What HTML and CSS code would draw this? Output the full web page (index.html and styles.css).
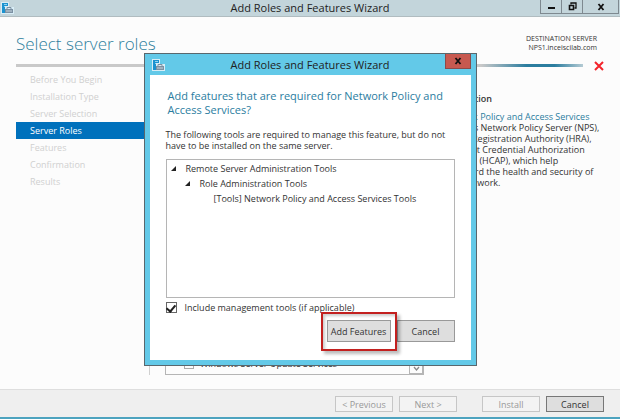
FILE: index.html
```html
<!DOCTYPE html>
<html lang="en">
<head>
<meta charset="utf-8">
<title>Add Roles and Features Wizard</title>
<link rel="stylesheet" href="styles.css">
</head>
<body>
<svg class="defs" aria-hidden="true">
  <symbol id="server" viewBox="0 0 13 12">
    <path d="M0 0H8V5H13V12H0Z" fill="#d8edf6"/>
    <path d="M1 1H7V4H4V11H1Z" fill="#1b92cf"/>
    <path d="M3 2.500H6M3 4.500H4" stroke="#8fd3f2" stroke-width="1"/>
    <path d="M4 7H12V11H4Z" fill="#7c91a3"/>
    <path d="M6 7V5.500H10V7" fill="none" stroke="#7c91a3"/>
    <path d="M5 9H11" stroke="#c4d3dd" stroke-width="1"/>
  </symbol>
</svg>
<div class="window">
  <header class="titlebar">
    <svg class="app-icon"><use href="#server"/></svg>
    <h1 class="title">Add Roles and Features Wizard</h1>
    <div class="controls">
      <button class="control" aria-label="Minimize"><svg width="9" height="9"><path d="M1 6H8" stroke="#111" stroke-width="2"/></svg></button>
      <button class="control" aria-label="Restore"><svg width="9" height="9" fill="none" stroke="#111"><path d="M3 2.500V1H8V6H6.500" stroke-width="1.300"/><path d="M1.500 3.500H5.500V7.500H1.500Z" stroke-width="1.600"/></svg></button>
      <button class="control control-wide" aria-label="Close"><svg width="8" height="8"><path d="M1.500 1L6.500 7M6.500 1L1.500 7" stroke="#111" stroke-width="1.800"/></svg></button>
    </div>
  </header>
  <div class="heading">
    <h2 class="page-title">Select server roles</h2>
    <p class="destination">DESTINATION SERVER<br>NPS1.inceiscilab.com</p>
  </div>
  <div class="progress">
    <div class="progress-line"></div>
    <svg width="10" height="10"><path d="M1 1L9 9M9 1L1 9" stroke="#f3232b" stroke-width="2"/></svg>
  </div>
  <div class="body">
    <nav class="steps">
      <a class="step" href="#">Before You Begin</a>
      <a class="step" href="#">Installation Type</a>
      <a class="step" href="#">Server Selection</a>
      <a class="step step-current" href="#">Server Roles</a>
      <a class="step" href="#">Features</a>
      <a class="step" href="#">Confirmation</a>
      <a class="step" href="#">Results</a>
    </nav>
    <div class="roles">
      <div class="role-list">
        <label class="role"><input class="role-check" type="checkbox">Windows Server Update Services</label>
        <button class="scroll-down" aria-label="Scroll down"><svg width="7" height="5"><path d="M1 1L3.500 4L6 1" fill="none" stroke="#888" stroke-width="1.300"/></svg></button>
      </div>
    </div>
    <section class="details">
      <h3 class="details-title">Description</h3>
      <p class="details-text"><a class="link" href="#">Network Policy and Access Services</a><br>provides Network Policy Server (NPS),<br>Health Registration Authority (HRA),<br>and Host Credential Authorization<br>Protocol (HCAP), which help<br>safeguard the health and security of<br>your network.</p>
    </section>
  </div>
  <footer class="footer">
    <button class="nav-button" disabled>&lt; Previous</button>
    <button class="nav-button" disabled>Next &gt;</button>
    <button class="nav-button nav-install" disabled>Install</button>
    <button class="nav-button">Cancel</button>
  </footer>
  <div class="taskbar"></div>
</div>
<div class="overlay">
  <div class="dialog" role="dialog" aria-labelledby="dialog-title">
    <header class="dialog-bar">
      <svg class="app-icon"><use href="#server"/></svg>
      <h2 class="title" id="dialog-title">Add Roles and Features Wizard</h2>
      <button class="dialog-close" aria-label="Close"><svg width="8" height="8"><path d="M1.500 1L6.500 7M6.500 1L1.500 7" stroke="#111" stroke-width="1.800"/></svg></button>
    </header>
    <div class="dialog-body">
      <h3 class="question">Add features that are required for Network Policy and<br>Access Services?</h3>
      <p class="explain">The following tools are required to manage this feature, but do not<br>have to be installed on the same server.</p>
      <ul class="tree">
        <li class="node"><svg class="arrow"><path d="M0 5L5 0V5Z" fill="#222"/></svg>Remote Server Administration Tools</li>
        <li class="node node-child"><svg class="arrow"><path d="M0 5L5 0V5Z" fill="#222"/></svg>Role Administration Tools</li>
        <li class="node node-leaf">[Tools] Network Policy and Access Services Tools</li>
      </ul>
      <label class="include"><input class="include-check" type="checkbox" checked>Include management tools (if applicable)</label>
      <div class="actions">
        <span class="callout"><button class="button">Add Features</button></span>
        <button class="button button-cancel">Cancel</button>
      </div>
    </div>
  </div>
</div>
</body>
</html>
```
FILE: styles.css
```css
* { box-sizing: border-box; }
body {
  margin: 0;
  font: 9px/11px "Open Sans", "Noto Sans", sans-serif;
  color: #333;
}
h1, h2, h3, p, ul { margin: 0; padding: 0; font-weight: 400; }
button { font: inherit; color: inherit; padding: 0; }
svg { display: block; }
.defs { position: absolute; width: 0; height: 0; }

.window {
  min-height: 100vh;
  display: flex;
  flex-direction: column;
  background: #fcfcfc;
}
.titlebar {
  position: relative;
  display: flex;
  align-items: center;
  height: 17px;
  padding: 0 14px 0 1px;
  background: #c3d5db;
  border-bottom: 1px solid #b0bcc0;
}
.app-icon { width: 13px; height: 12px; }
.title {
  flex: 1;
  text-align: center;
  font-size: 11px;
  line-height: 16px;
  color: #222;
}
.controls {
  position: absolute;
  top: 0;
  right: 1px;
  display: flex;
  border: 1px solid #7e8990;
  border-top: 0;
}
.control {
  width: 21px;
  height: 13px;
  display: grid;
  place-items: center;
  background: none;
  border: 0;
  border-right: 1px solid #7e8990;
}
.control-wide { width: 35px; border-right: 0; }

.heading {
  display: flex;
  justify-content: space-between;
  padding: 15px 23px 0 16px;
  height: 46px;
}
.page-title {
  font-size: 17px;
  font-weight: 300;
  line-height: 24px;
  color: #2f7f9d;
}
.destination {
  padding-top: 2px;
  font-size: 7px;
  line-height: 9px;
  text-align: right;
}
.progress {
  display: flex;
  align-items: center;
  gap: 11px;
  height: 5px;
  padding: 0 16px;
}
.progress-line {
  flex: 1;
  height: 3px;
  background: linear-gradient(90deg, #c9c9c9 82%, #2b7d9f 90%, #2b7d9f 95%, #b5cbd4);
}
.progress svg { overflow: visible; }

.body {
  flex: 1;
  display: grid;
  grid-template-columns: 133px 275px 1fr;
  padding: 3px 16px 14px;
}
.steps { display: flex; flex-direction: column; }
.step {
  line-height: 17px;
  padding-left: 14px;
  color: #d0d0d0;
  text-decoration: none;
}
.step-current { background: #0071bc; color: #fff; }
.roles {
  display: flex;
  padding-left: 15px;
  border-left: 1px solid #d0d0d0;
}
.role-list {
  flex: 1;
  display: flex;
  align-items: flex-end;
  justify-content: space-between;
  border: 1px solid #b5b5b5;
}
.role {
  display: flex;
  align-items: center;
  gap: 6px;
  padding: 0 0 5px 18px;
}
.role-check {
  appearance: none;
  width: 10px;
  height: 10px;
  margin: 0;
  border: 1px solid #aaa;
}
.scroll-down {
  display: grid;
  place-items: center;
  width: 14px;
  height: 12px;
  background: #fcfcfc;
  border: 1px solid #b5b5b5;
}
.details { padding: 22px 0 0 18px; }
.details-title {
  margin-bottom: 7px;
  font-size: 9px;
  font-weight: 600;
  line-height: 11px;
}
.details-text { white-space: nowrap; }
.link { color: #2b7d9f; text-decoration: none; }

.footer {
  display: flex;
  justify-content: flex-end;
  gap: 6px;
  padding: 6px 16px 5px;
  background: #efefef;
  border-top: 1px solid #dedede;
}
.nav-button {
  width: 58px;
  height: 16px;
  background: #dedede;
  border: 1px solid #777;
}
.nav-button:disabled { background: #f3f3f3; border-color: #c6c6c6; color: #999; }
.nav-install { margin-left: 19px; }
.taskbar { height: 2px; background: #4da3bf; }

.overlay {
  position: fixed;
  inset: 0;
  display: grid;
  place-items: center;
}
.dialog {
  width: 333px;
  background: #63c9e8;
  border: 1px solid #59676d;
  padding: 0 5px 5px;
}
.dialog-bar {
  position: relative;
  display: flex;
  align-items: center;
  height: 21px;
  padding: 0 15px 0 2px;
}
.dialog-close {
  position: absolute;
  top: 0;
  right: 0;
  display: grid;
  place-items: center;
  width: 26px;
  height: 15px;
  background: #c75950;
  border: 1px solid #8d4a49;
  border-top: 0;
}
.dialog-body { background: #fff; padding: 14px 16px 18px; }
.question {
  padding-left: 2px;
  font-size: 11px;
  line-height: 14px;
  color: #2b7d9f;
  white-space: nowrap;
}
.explain { margin: 12px 0 8px; white-space: nowrap; }
.tree {
  height: 139px;
  padding: 1px 4px;
  border: 1px solid #b5b5b5;
  list-style: none;
}
.node { display: flex; align-items: center; gap: 10px; line-height: 15px; }
.arrow { width: 5px; height: 5px; }
.node-child { padding-left: 14px; }
.node-leaf { padding-left: 43px; }
.include { display: flex; align-items: center; gap: 8px; margin-top: 4px; }
.include-check {
  appearance: none;
  width: 11px;
  height: 11px;
  margin: 0;
  background: #fff;
  border: 1px solid #666;
  display: grid;
  place-items: center;
}
.include-check::after {
  content: "";
  width: 4px;
  height: 7px;
  margin-bottom: 2px;
  border: solid #222;
  border-width: 0 2px 2px 0;
  transform: rotate(40deg);
}
.actions { display: flex; justify-content: flex-end; gap: 6px; margin-top: 7px; }
.button {
  display: block;
  width: 64px;
  height: 22px;
  background: #dedede;
  border: 1px solid #999;
}
.button-cancel { width: 58px; }
.callout { position: relative; }
.callout::after {
  content: "";
  position: absolute;
  inset: -8px -6px -9px;
  border: 2px solid #c3201f;
  box-shadow: 3px 3px 3px #0004, inset 2px 2px 3px #0003;
  pointer-events: none;
}
```
